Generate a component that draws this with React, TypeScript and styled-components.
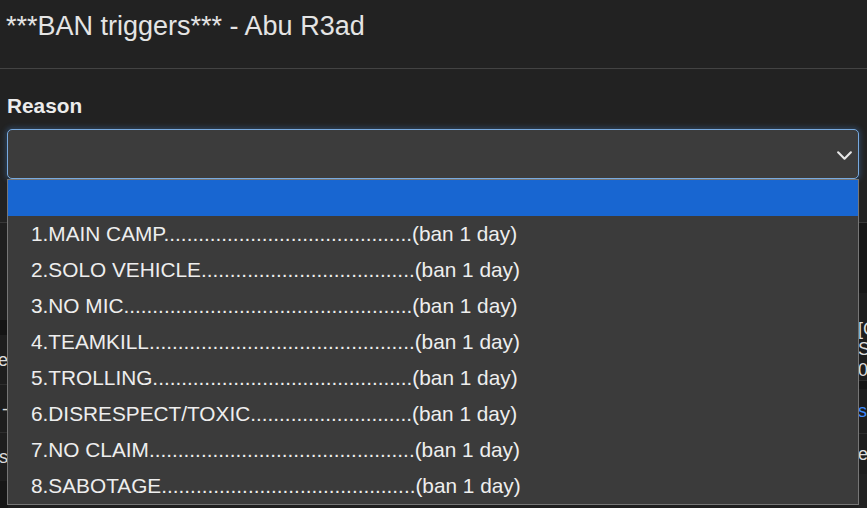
import React from "react";
import styled, { createGlobalStyle } from "styled-components";

const GlobalStyle = createGlobalStyle`
  html, body { margin: 0; padding: 0; background: #222222; overflow: hidden; }
  body { font-family: "Liberation Sans", Arial, sans-serif; }
  * { box-sizing: border-box; }
`;

const Page = styled.div`
  position: relative;
  width: 867px;
  height: 508px;
  overflow: hidden;
  background: #222222;
  display: flex;
  flex-direction: column;
`;

const Header = styled.header`
  height: 69px;
  flex: none;
  padding: 11px 6px 0;
  border-bottom: 1px solid #434343;
`;

const Title = styled.h5`
  margin: 0;
  font-size: 27px;
  line-height: 31px;
  font-weight: 400;
  color: #e4e4e4;
  white-space: nowrap;
`;

const Body = styled.div`
  flex: none;
  padding: 25px 8px 0 7px;
  position: relative;
`;

const Label = styled.label`
  display: block;
  font-size: 20.8px;
  font-weight: 700;
  line-height: 24px;
  color: #ececec;
  margin-bottom: 11px;
`;

const SelectBox = styled.div`
  height: 50px;
  border: 1px solid #78aadf;
  border-radius: 5px;
  background: #3c3c3c;
  box-shadow: 0 0 5px 2px rgba(70, 130, 200, 0.3);
  display: flex;
  align-items: center;
  justify-content: flex-end;
  padding-right: 5px;
`;

const Chevron = styled.svg`
  width: 17px;
  height: 17px;
  margin-top: 2px;
`;

const DropList = styled.ul`
  position: absolute;
  top: 110px;
  left: 7px;
  width: 852px;
  margin: 0;
  padding: 0;
  list-style: none;
  background: #3b3b3b;
  border: 1px solid #767676;
  z-index: 2;
`;

const Option = styled.li<{ $active?: boolean }>`
  height: 36px;
  display: flex;
  align-items: center;
  padding-left: 23px;
  font-size: 20.8px;
  color: #eeeeee;
  white-space: nowrap;
  background: ${(p) => (p.$active ? "#1866d1" : "transparent")};
`;

/* background content that peeks out beside the open list */
const Behind = styled.div`
  flex: 1;
  margin-top: 43px;
  display: grid;
  grid-template-columns: 8px 1fr 9px;
  border-top: 1px solid #383838;
  font-size: 18px;
  line-height: 20px;
  color: #dcdcdc;
`;

const SideCol = styled.div`
  display: flex;
  flex-direction: column;
  overflow: hidden;
`;

const Block = styled.div<{ $h: number; $bg: string; $line?: boolean; $align?: "start" | "end" }>`
  height: ${(p) => p.$h}px;
  flex: none;
  background: ${(p) => p.$bg};
  border-bottom: ${(p) => (p.$line ? "1px solid #2e2e2e" : "none")};
  display: flex;
  align-items: center;
  justify-content: ${(p) => (p.$align === "end" ? "flex-end" : "flex-start")};
  white-space: nowrap;
  overflow: hidden;
`;

const Blue = styled.span`
  color: #3d8bfd;
`;

const Middle = styled.div`
  background: #1e1e1e;
`;

const options = [
  { label: "1.MAIN CAMP", dots: 43 },
  { label: "2.SOLO VEHICLE", dots: 37 },
  { label: "3.NO MIC", dots: 50 },
  { label: "4.TEAMKILL", dots: 46 },
  { label: "5.TROLLING", dots: 45 },
  { label: "6.DISRESPECT/TOXIC", dots: 28 },
  { label: "7.NO CLAIM", dots: 46 },
  { label: "8.SABOTAGE", dots: 44 },
];

export default function App() {
  return (
    <>
      <GlobalStyle />
      <Page>
        <Header>
          <Title>***BAN triggers*** - Abu R3ad</Title>
        </Header>
        <Body>
          <Label>Reason</Label>
          <SelectBox>
            <Chevron viewBox="0 0 16 16" fill="none">
              <path
                d="M2 5l6 6 6-6"
                stroke="#e6e6e6"
                strokeWidth="2"
                strokeLinecap="round"
                strokeLinejoin="round"
              />
            </Chevron>
          </SelectBox>
          <DropList>
            <Option $active>&nbsp;</Option>
            {options.map((o) => (
              <Option key={o.label}>
                {o.label + ".".repeat(o.dots) + "(ban 1 day)"}
              </Option>
            ))}
          </DropList>
        </Body>
        <Behind>
          <SideCol>
            <Block $h={97} $bg="#1f1f1f" />
            <Block $h={15} $bg="#141414" />
            <Block $h={50} $bg="#1e1e1e" $line $align="end">
              Name
            </Block>
            <Block $h={48} $bg="#1e1e1e" $line $align="end">
              -
            </Block>
            <Block $h={48} $bg="#1e1e1e" $align="end">
              Ses
            </Block>
            <Block $h={40} $bg="#161616" />
          </SideCol>
          <Middle />
          <SideCol>
            <Block $h={70} $bg="#171717" />
            <Block $h={26} $bg="#1e1e1e" />
            <Block $h={20} $bg="#1e1e1e">[C</Block>
            <Block $h={20} $bg="#1e1e1e">Se</Block>
            <Block $h={22} $bg="#1e1e1e" $line>08</Block>
            <Block $h={8} $bg="#161616" />
            <Block $h={45} $bg="#1e1e1e" $line>
              <Blue>s</Blue>:
            </Block>
            <Block $h={40} $bg="#1e1e1e">e</Block>
          </SideCol>
        </Behind>
      </Page>
    </>
  );
}
